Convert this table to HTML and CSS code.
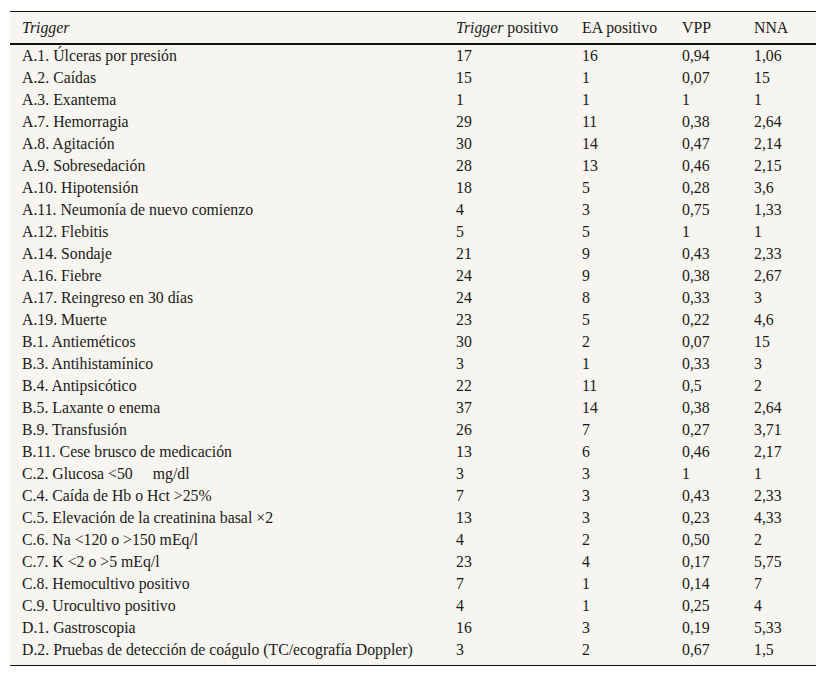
FILE: index.html
```html
<!DOCTYPE html>
<html lang="es">
<head>
<meta charset="utf-8">
<title>Triggers</title>
<link rel="stylesheet" href="styles.css">
</head>
<body>
<table class="data">
<colgroup>
<col class="c1"><col class="c2"><col class="c3"><col class="c4"><col class="c5">
</colgroup>
<thead>
<tr><th><i>Trigger</i></th><th><i>Trigger</i> positivo</th><th>EA positivo</th><th>VPP</th><th>NNA</th></tr>
</thead>
<tbody>
<tr><td>A.1. Úlceras por presión</td><td>17</td><td>16</td><td>0,94</td><td>1,06</td></tr>
<tr><td>A.2. Caídas</td><td>15</td><td>1</td><td>0,07</td><td>15</td></tr>
<tr><td>A.3. Exantema</td><td>1</td><td>1</td><td>1</td><td>1</td></tr>
<tr><td>A.7. Hemorragia</td><td>29</td><td>11</td><td>0,38</td><td>2,64</td></tr>
<tr><td>A.8. Agitación</td><td>30</td><td>14</td><td>0,47</td><td>2,14</td></tr>
<tr><td>A.9. Sobresedación</td><td>28</td><td>13</td><td>0,46</td><td>2,15</td></tr>
<tr><td>A.10. Hipotensión</td><td>18</td><td>5</td><td>0,28</td><td>3,6</td></tr>
<tr><td>A.11. Neumonía de nuevo comienzo</td><td>4</td><td>3</td><td>0,75</td><td>1,33</td></tr>
<tr><td>A.12. Flebitis</td><td>5</td><td>5</td><td>1</td><td>1</td></tr>
<tr><td>A.14. Sondaje</td><td>21</td><td>9</td><td>0,43</td><td>2,33</td></tr>
<tr><td>A.16. Fiebre</td><td>24</td><td>9</td><td>0,38</td><td>2,67</td></tr>
<tr><td>A.17. Reingreso en 30 días</td><td>24</td><td>8</td><td>0,33</td><td>3</td></tr>
<tr><td>A.19. Muerte</td><td>23</td><td>5</td><td>0,22</td><td>4,6</td></tr>
<tr><td>B.1. Antieméticos</td><td>30</td><td>2</td><td>0,07</td><td>15</td></tr>
<tr><td>B.3. Antihistamínico</td><td>3</td><td>1</td><td>0,33</td><td>3</td></tr>
<tr><td>B.4. Antipsicótico</td><td>22</td><td>11</td><td>0,5</td><td>2</td></tr>
<tr><td>B.5. Laxante o enema</td><td>37</td><td>14</td><td>0,38</td><td>2,64</td></tr>
<tr><td>B.9. Transfusión</td><td>26</td><td>7</td><td>0,27</td><td>3,71</td></tr>
<tr><td>B.11. Cese brusco de medicación</td><td>13</td><td>6</td><td>0,46</td><td>2,17</td></tr>
<tr><td>C.2. Glucosa &lt;50<span class="gap"></span>mg/dl</td><td>3</td><td>3</td><td>1</td><td>1</td></tr>
<tr><td>C.4. Caída de Hb o Hct &gt;25%</td><td>7</td><td>3</td><td>0,43</td><td>2,33</td></tr>
<tr><td>C.5. Elevación de la creatinina basal ×2</td><td>13</td><td>3</td><td>0,23</td><td>4,33</td></tr>
<tr><td>C.6. Na &lt;120 o &gt;150 mEq/l</td><td>4</td><td>2</td><td>0,50</td><td>2</td></tr>
<tr><td>C.7. K &lt;2 o &gt;5 mEq/l</td><td>23</td><td>4</td><td>0,17</td><td>5,75</td></tr>
<tr><td>C.8. Hemocultivo positivo</td><td>7</td><td>1</td><td>0,14</td><td>7</td></tr>
<tr><td>C.9. Urocultivo positivo</td><td>4</td><td>1</td><td>0,25</td><td>4</td></tr>
<tr><td>D.1. Gastroscopia</td><td>16</td><td>3</td><td>0,19</td><td>5,33</td></tr>
<tr class="last"><td>D.2. Pruebas de detección de coágulo (TC/ecografía Doppler)</td><td>3</td><td>2</td><td>0,67</td><td>1,5</td></tr>
</tbody>
</table>
</body>
</html>
```
FILE: styles.css
```css
html, body {
  margin: 0;
  background: #ffffff;
}
body {
  padding: 11px 10px 0 10px;
  font-family: "Liberation Serif", "Times New Roman", serif;
  font-size: 15.8px;
  color: #1a1a1a;
}
.data {
  width: 806px;
  border-collapse: collapse;
  table-layout: fixed;
  background: #f7f5ef;
  border-top: 1px solid #111;
  border-bottom: 1px solid #111;
}
.c1 { width: 434px; }
.c2 { width: 126px; }
.c3 { width: 100px; }
.c4 { width: 72px; }
.c5 { width: 74px; }
.data th {
  font-weight: normal;
  text-align: left;
  height: 31px;
  padding: 0 0 0 12px;
  border-bottom: 2px solid #111;
  vertical-align: middle;
  line-height: 22px;
}
.data td {
  height: 22px;
  padding: 0 0 0 12px;
  white-space: nowrap;
  vertical-align: middle;
  line-height: 22px;
}
.data tr.last td {
  height: 26px;
  vertical-align: top;
  padding-top: 0;
}
.gap {
  display: inline-block;
  width: 20px;
}
```
